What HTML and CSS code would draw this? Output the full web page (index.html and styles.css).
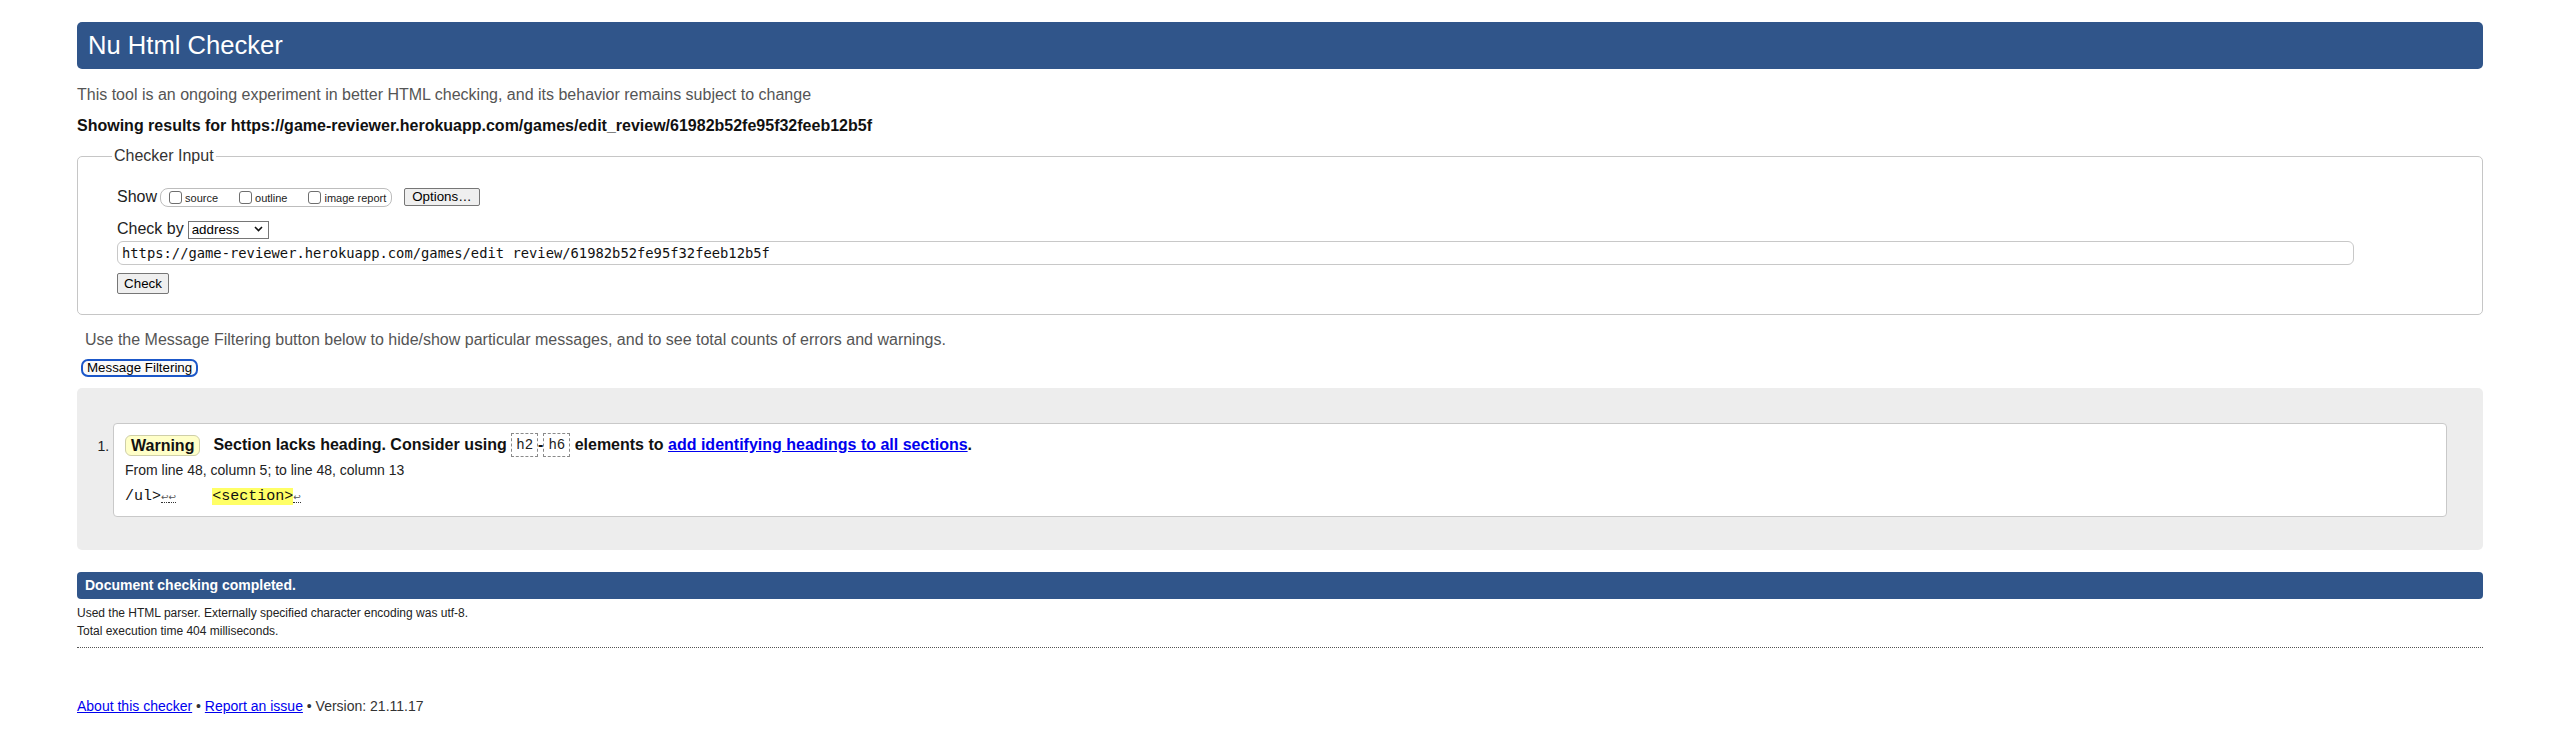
FILE: index.html
```html
<!DOCTYPE html>
<html lang="en">
<head>
<meta charset="utf-8">
<title>Showing results for https://game-reviewer.herokuapp.com/games/edit_review/61982b52fe95f32feeb12b5f - Nu Html Checker</title>
<link rel="stylesheet" href="styles.css">
</head>
<body>
<div class="page">
  <h1 class="title">Nu Html Checker</h1>
  <p class="intro">This tool is an ongoing experiment in better HTML checking, and its behavior remains subject to change</p>
  <p class="showing">Showing results for https://game-reviewer.herokuapp.com/games/edit_review/61982b52fe95f32feeb12b5f</p>

  <form class="checker-form">
    <fieldset class="input-set">
      <legend>Checker Input</legend>
      <div class="fs-body">
        <div class="show-row">
          <span class="show-label">Show</span>
          <fieldset class="show-opts">
            <label class="opt"><input type="checkbox"><span>source</span></label>
            <label class="opt"><input type="checkbox"><span>outline</span></label>
            <label class="opt"><input type="checkbox"><span>image report</span></label>
          </fieldset>
          <button type="button" class="btn">Options…</button>
        </div>
        <div class="checkby-row">
          <span class="checkby-label">Check by</span>
          <span class="select-wrap">
            <select class="select"><option>address</option></select>
            <svg class="chev" width="9" height="6" viewBox="0 0 9 6"><path d="M1 1l3.5 3.5L8 1" fill="none" stroke="#111" stroke-width="1.6"/></svg>
          </span>
        </div>
        <input class="url" type="text" value="https://game-reviewer.herokuapp.com/games/edit_review/61982b52fe95f32feeb12b5f">
        <button type="button" class="btn check-btn">Check</button>
      </div>
    </fieldset>
  </form>

  <p class="filter-note">Use the Message Filtering button below to hide/show particular messages, and to see total counts of errors and warnings.</p>
  <button type="button" class="filter-btn">Message Filtering</button>

  <div class="results">
    <ol class="msgs">
      <li class="msg">
        <p class="msg-line"><span class="badge">Warning</span> <span class="msg-text">Section lacks heading. Consider using <code class="tag">h2</code>-<code class="tag">h6</code> elements to <a href="#">add identifying headings to all sections</a>.</span></p>
        <p class="location">From line 48, column 5; to line 48, column 13</p>
        <p class="extract">/ul&gt;<span class="lf">↩</span><span class="lf">↩</span>    <span class="hl">&lt;section&gt;</span><span class="lf">↩</span></p>
      </li>
    </ol>
  </div>

  <p class="done">Document checking completed.</p>
  <p class="details">Used the HTML parser. Externally specified character encoding was utf-8.</p>
  <p class="details tight">Total execution time 404 milliseconds.</p>
  <hr class="sep">

  <p class="footer"><a href="#">About this checker</a> • <a href="#">Report an issue</a> • Version: 21.11.17</p>
</div>
</body>
</html>
```
FILE: styles.css
```css
* { box-sizing: border-box; }

body {
  margin: 0;
  background: #fff;
  color: #222;
  font-family: "Liberation Sans", Arial, Helvetica, sans-serif;
}

.page {
  padding: 22px 70px 30px 77px;
}

.title {
  margin: 0;
  height: 47px;
  line-height: 47px;
  padding: 0 11px;
  background: #30558a;
  color: #fff;
  font-size: 25.6px;
  font-weight: normal;
  border-radius: 5px;
}

.intro {
  margin: 16px 0 0;
  font-size: 16px;
  line-height: 20px;
  color: #555;
}

.showing {
  margin: 11px 0 0;
  font-size: 16px;
  line-height: 20px;
  font-weight: bold;
  color: #111;
}

.checker-form {
  margin: 10px 0 0;
}

.input-set {
  margin: 0;
  min-width: 0;
  border: 1px solid #c6c6c6;
  border-radius: 5px;
  padding: 21px 20px 20px 34px;
}

.input-set legend {
  font-size: 16px;
  line-height: 20px;
  padding: 0 2px;
  color: #333;
}

.fs-body {
  display: flex;
  flex-direction: column;
  align-items: flex-start;
  padding-left: 5px;
}

.show-row {
  display: flex;
  align-items: center;
  height: 20px;
}

.show-label {
  font-size: 16px;
  line-height: 20px;
  margin-right: 3px;
  color: #222;
}

.show-opts {
  display: flex;
  align-items: center;
  height: 19px;
  margin: 0 12px 0 0;
  padding: 0 5px 0 8px;
  border: 1px solid #bdbdbd;
  border-radius: 8px;
  min-width: 0;
}

.opt {
  display: flex;
  align-items: center;
  font-size: 11px;
  color: #222;
}

.opt + .opt {
  margin-left: 21px;
}

.opt span {
  margin-left: 3px;
  padding-top: 2px;
}

.opt input {
  appearance: none;
  -webkit-appearance: none;
  width: 13px;
  height: 13px;
  margin: 0;
  border: 1px solid #6f6f6f;
  border-radius: 3px;
  background: #fff;
}

.btn {
  font-family: "Liberation Sans", Arial, sans-serif;
  font-size: 13.33px;
  height: 18px;
  line-height: 16px;
  padding: 0 7px;
  color: #000;
  background: #efefef;
  border: 1px solid #767676;
  border-radius: 2px;
}

.checkby-row {
  display: flex;
  align-items: center;
  height: 20px;
  margin-top: 12px;
}

.checkby-label {
  font-size: 16px;
  line-height: 20px;
  margin-right: 4px;
}

.select-wrap {
  position: relative;
  display: inline-block;
}

.select {
  appearance: none;
  -webkit-appearance: none;
  width: 81px;
  height: 18px;
  padding: 0 0 0 3px;
  font-family: "Liberation Sans", Arial, sans-serif;
  font-size: 13.33px;
  line-height: 16px;
  color: #000;
  background: #fff;
  border: 1px solid #767676;
  border-radius: 0;
}

.chev {
  position: absolute;
  right: 6px;
  top: 6px;
  pointer-events: none;
}

.url {
  margin-top: 2px;
  width: calc(100% - 108px);
  height: 24px;
  padding: 0 4px;
  line-height: 20px;
  font-family: "DejaVu Sans Mono", "Liberation Mono", monospace;
  font-size: 13.8px;
  color: #111;
  border: 1px solid #c8c8c8;
  border-radius: 6px;
  background: #fff;
}

.check-btn {
  margin-top: 8px;
  height: 21px;
  width: 52px;
  padding: 0;
}

.filter-note {
  margin: 15px 0 0;
  padding-left: 8px;
  font-size: 16px;
  line-height: 20px;
  color: #555;
}

.filter-btn {
  display: block;
  margin: 9px 0 0 4px;
  height: 18px;
  padding: 0 4px;
  font-family: "Liberation Sans", Arial, sans-serif;
  font-size: 13.33px;
  line-height: 14px;
  color: #000;
  background: #fafafa;
  border: 2px solid #1b57c9;
  border-radius: 7px;
}

.results {
  margin-top: 11px;
  padding: 35px 36px 33px;
  background: #ededed;
  border-radius: 5px;
}

.msgs {
  margin: 0;
  padding: 0;
  list-style: decimal outside;
}

.msg {
  background: #fff;
  border: 1px solid #c9c9c9;
  border-radius: 4px;
  padding: 9px 11px 10px;
  font-size: 14px;
  color: #222;
}

.msg::marker {
  font-size: 14px;
  color: #222;
}

.msg-line {
  margin: 0;
  height: 24px;
  line-height: 24px;
  font-size: 16px;
  font-weight: bold;
  color: #111;
  display: flex;
  align-items: center;
}

.msg-text {
  margin-left: 13px;
  white-space: pre;
}

.badge {
  display: inline-block;
  height: 21px;
  line-height: 19px;
  padding: 0 5px;
  background: #ffffc8;
  border: 1px solid #cfcfa8;
  border-radius: 6px;
  color: #111;
}

.tag {
  display: inline-block;
  height: 24px;
  line-height: 22px;
  padding: 0 4px;
  vertical-align: middle;
  font-family: "Liberation Mono", "Courier New", monospace;
  font-size: 14px;
  font-weight: normal;
  color: #222;
  border: 1px dashed #8a8a8a;
}

.msg a {
  color: #0000ee;
}

.location {
  margin: 5px 0 0;
  line-height: 16px;
  font-size: 14px;
}

.extract {
  margin: 10px 0 0;
  line-height: 17px;
  font-family: "Liberation Mono", "Courier New", monospace;
  font-size: 15px;
  white-space: pre;
  color: #111;
}

.hl {
  background: #ffff66;
}

.lf {
  font-family: "DejaVu Sans", sans-serif;
  font-size: 9px;
  color: #555;
  border-bottom: 1px dotted #333;
}

.done {
  margin: 22px 0 0;
  height: 27px;
  line-height: 27px;
  padding: 0 8px;
  background: #30558a;
  color: #fff;
  font-size: 14px;
  font-weight: bold;
  border-radius: 4px;
}

.details {
  margin: 5px 0 0;
  font-size: 12px;
  line-height: 18px;
  color: #222;
}

.details.tight {
  margin-top: 0;
}

.sep {
  margin: 7px 0 0;
  height: 0;
  border: 0;
  border-top: 1px dotted #555;
}

.footer {
  margin: 49px 0 0;
  font-size: 14px;
  line-height: 18px;
  color: #333;
}

.footer a {
  color: #0000ee;
}
```
